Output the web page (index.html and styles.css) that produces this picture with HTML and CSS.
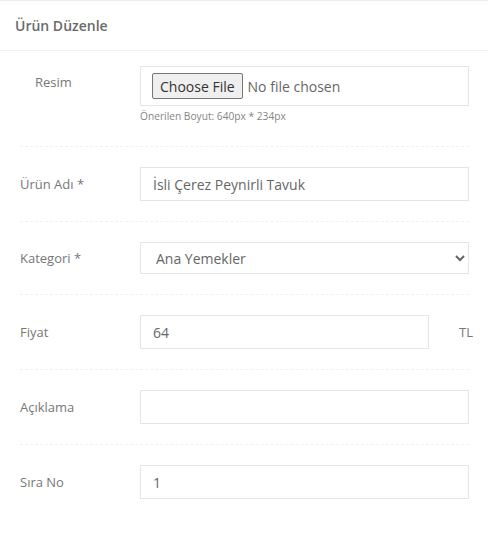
FILE: index.html
```html
<!DOCTYPE html>
<html>
<head>
    <title>Ürün Düzenle</title>
    <meta name="viewport" content="width=device-width, initial-scale=1.0">
    <link rel="stylesheet" href="styles.css">
</head>
<body>
    <div class="portlet">
        <div class="portlet-title">Ürün Düzenle</div>

        <form class="portlet-body">
            <div class="form-row first">
                <label class="control-label label-image" for="resim">Resim</label>
                <div class="control">
                    <div class="file-box">
                        <input type="file" id="resim">
                    </div>
                    <span class="help-block">Önerilen Boyut: 640px * 234px</span>
                </div>
            </div>

            <div class="form-row">
                <label class="control-label" for="urunAdi">Ürün Adı *</label>
                <div class="control">
                    <input type="text" id="urunAdi" class="form-control" value="İsli Çerez Peynirli Tavuk">
                </div>
            </div>

            <div class="form-row">
                <label class="control-label" for="kategori">Kategori *</label>
                <div class="control">
                    <select id="kategori" class="form-control form-select">
                        <option>Ana Yemekler</option>
                        <option>Başlangıçlar</option>
                        <option>Tatlılar</option>
                    </select>
                </div>
            </div>

            <div class="form-row">
                <label class="control-label" for="fiyat">Fiyat</label>
                <div class="control control-price">
                    <input type="text" id="fiyat" class="form-control price" value="64">
                    <span class="unit">TL</span>
                </div>
            </div>

            <div class="form-row">
                <label class="control-label" for="aciklama">Açıklama</label>
                <div class="control">
                    <input type="text" id="aciklama" class="form-control">
                </div>
            </div>

            <div class="form-row last">
                <label class="control-label" for="siraNo">Sıra No</label>
                <div class="control">
                    <input type="text" id="siraNo" class="form-control" value="1">
                </div>
            </div>
        </form>
    </div>
</body>
</html>
```

FILE: styles.css
```css
body {
    margin: 0;
    background: #fff;
    font-family: 'Open Sans', sans-serif;
    color: #666;
}
.portlet {
    border-top: 1px solid #e7ecf1;
}
.portlet-title {
    height: 49px;
    line-height: 49px;
    padding-left: 15px;
    font-size: 14px;
    font-weight: 600;
    color: #6a6a6a;
    border-bottom: 1px solid #eef1f5;
}
.portlet-body {
    padding: 0 19px 0 20px;
}
.form-row {
    display: flex;
    align-items: center;
    padding: 20px 0;
    border-bottom: 1px dashed #eef1f5;
}
.form-row.first {
    align-items: flex-start;
    padding-top: 15px;
    padding-bottom: 23px;
}
.form-row.last {
    border-bottom: none;
}
.control-label {
    width: 120px;
    flex-shrink: 0;
    font-size: 13px;
    color: #777;
}
.label-image {
    padding-left: 15px;
    width: 105px;
    padding-top: 7px;
}
.control {
    flex: 1;
}
.file-box {
    height: 38px;
    border: 1px solid #e5e5e5;
    padding: 0 11px;
    display: flex;
    align-items: center;
}
.file-box input {
    font-family: 'Open Sans', sans-serif;
    font-size: 14px;
    color: #666;
}
.file-box input::file-selector-button {
    height: 26px;
    padding: 0 7px;
    margin-right: 5px;
    font-family: 'Open Sans', sans-serif;
    font-size: 14px;
    color: #333;
    background: #efefef;
    border: 1px solid #767676;
    border-radius: 2px;
}
.help-block {
    display: block;
    margin-top: 3px;
    font-size: 10.2px;
    color: #858585;
}
.form-control {
    box-sizing: border-box;
    width: 100%;
    height: 34px;
    padding: 6px 12px;
    border: 1px solid #e5e5e5;
    border-radius: 0;
    font-family: 'Open Sans', sans-serif;
    font-size: 14px;
    color: #666;
    background: #fff;
    outline: none;
}
.form-select {
    height: 32px;
    padding: 4px 8px 4px 11px;
}
.control-price {
    display: flex;
    align-items: center;
}
.price {
    width: 289px;
    flex-shrink: 0;
}
.unit {
    margin-left: 30px;
    font-size: 13px;
    color: #777;
}
```
